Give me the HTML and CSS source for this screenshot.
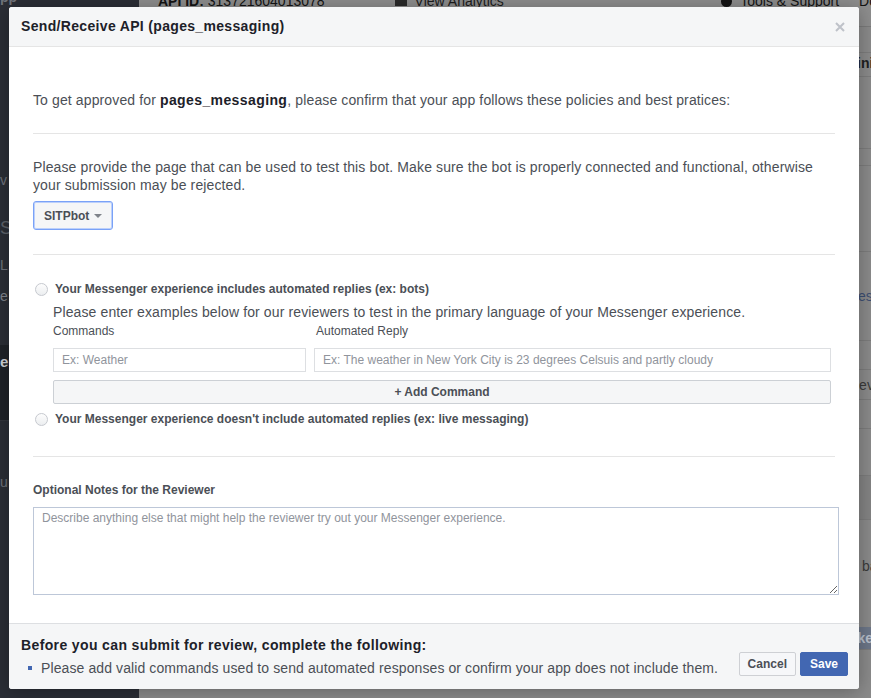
FILE: index.html
```html
<!DOCTYPE html>
<html lang="en">
<head>
<meta charset="utf-8">
<title>Send/Receive API</title>
<link rel="stylesheet" href="styles.css">
</head>
<body>
<div class="page">
  <aside class="sidebar">
    <div class="side-top">pp</div>
    <div class="side-item s1">v</div>
    <div class="side-item s2">S</div>
    <div class="side-item s3">L.c</div>
    <div class="side-item s4">e</div>
    <div class="side-band">er</div>
    <div class="side-item s5">u</div>
  </aside>
  <main class="main">
    <div class="topbar">
      <span class="api"><b>API ID:</b> 313721604013078</span>
      <span class="analytics"><i class="tb-icon"></i>View Analytics</span>
      <span class="tools"><i class="tb-bug"></i>Tools &amp; Support</span>
      <span class="docs">Docs</span>
    </div>
    <div class="rows">
      <div class="row r0"></div>
      <div class="row r1"><span class="rt bold">Adminis</span></div>
      <div class="row r2"></div>
      <div class="row r3"></div>
      <div class="row r4"></div>
      <div class="row r5"><span class="rt link">Messages</span></div>
      <div class="row r6"></div>
      <div class="row r7"><span class="rt">Review</span></div>
      <div class="row r8"></div>
      <div class="row r9"></div>
      <div class="row r10"></div>
      <div class="row r11"><span class="rt">bar</span></div>
      <div class="row r12"><span class="rt bold light">Make</span></div>
    </div>
  </main>
</div>

<div class="dialog">
  <div class="dlg-head">
    <h2 class="dlg-title">Send/Receive API (pages_messaging)</h2>
    <span class="dlg-close"><svg width="10" height="10" viewBox="0 0 10 10"><path d="M1 1L9 9M9 1L1 9" stroke="#bec2c9" stroke-width="2"/></svg></span>
  </div>
  <div class="dlg-body">
    <p class="intro">To get approved for <b>pages_messaging</b>, please confirm that your app follows these policies and best pratices:</p>
    <hr class="sep">
    <p class="text">Please provide the page that can be used to test this bot. Make sure the bot is properly connected and functional, otherwise your submission may be rejected.</p>
    <button class="select" type="button">SITPbot<i class="caret"></i></button>
    <hr class="sep">
    <label class="radio-row"><span class="radio"></span><span class="radio-label">Your Messenger experience includes automated replies (ex: bots)</span></label>
    <div class="indent">
      <p class="text">Please enter examples below for our reviewers to test in the primary language of your Messenger experience.</p>
      <div class="cmd-grid">
        <div class="col-label">Commands</div>
        <div class="col-label second">Automated Reply</div>
        <input class="field" type="text" placeholder="Ex: Weather">
        <input class="field" type="text" placeholder="Ex: The weather in New York City is 23 degrees Celsuis and partly cloudy">
      </div>
      <button class="add-btn" type="button">+ Add Command</button>
    </div>
    <label class="radio-row second-radio"><span class="radio"></span><span class="radio-label">Your Messenger experience doesn't include automated replies (ex: live messaging)</span></label>
    <hr class="sep sep-notes">
    <div class="notes-label">Optional Notes for the Reviewer</div>
    <textarea class="notes" placeholder="Describe anything else that might help the reviewer try out your Messenger experience."></textarea>
  </div>
  <div class="dlg-foot">
    <div class="foot-msg">
      <div class="foot-title">Before you can submit for review, complete the following:</div>
      <ul class="foot-list">
        <li>Please add valid commands used to send automated responses or confirm your app does not include them.</li>
      </ul>
    </div>
    <div class="foot-btns">
      <button class="btn cancel" type="button">Cancel</button>
      <button class="btn save" type="button">Save</button>
    </div>
  </div>
</div>
</body>
</html>
```

FILE: styles.css
```css
* { box-sizing: border-box; }
html, body { margin: 0; height: 100%; overflow: hidden; }
body {
  font-family: "Liberation Sans", Arial, sans-serif;
  background: #8b8b8b;
  position: relative;
}

/* dimmed background page */
.page { display: flex; height: 740px; margin-top: -10px; }
.sidebar {
  width: 139px; flex: none; background: #2b2e36;
  display: flex; flex-direction: column;
  color: #6f737b; font-size: 14px;
}
.side-top { height: 17px; line-height: 14px; color: #70747c; font-weight: bold; }
.side-item { height: 18px; line-height: 18px; }
.s1 { margin-top: 164px; }
.s2 { margin-top: 30px; font-size: 18px; color: #5f636b; }
.s3 { margin-top: 19px; }
.s4 { margin-top: 13px; color: #80848c; }
.side-band {
  margin-top: 40px; height: 76px; background: #1f2228; color: #d0d2d6;
  font-weight: bold; font-size: 15px; padding-top: 8px;
  border-bottom: 1px solid #33363d;
}
.s5 { margin-top: 52px; }

.main { flex: 1; display: flex; flex-direction: column; min-width: 0; }
.topbar {
  height: 37px; display: flex; align-items: flex-start; padding-top: 3px;
  font-size: 14px; color: #141414; border-bottom: 1px solid #7b7b7b;
  background: #8e8e8e;
}
.api { margin-left: 19px; line-height: 16px; }
.analytics { margin-left: 70px; line-height: 16px; display: flex; align-items: center; gap: 8px; color: #1c1c1c; }
.tb-icon { width: 12px; height: 10px; background: #2a2a2a; display: inline-block; }
.tools { margin-left: auto; line-height: 16px; display: flex; align-items: center; gap: 8px; }
.tb-bug { width: 11px; height: 11px; border-radius: 50%; background: #141414; display: inline-block; }
.docs { margin-left: 20px; margin-right: -20px; line-height: 16px; }

.rows { display: flex; flex-direction: column; }
.row { border-bottom: 1px solid #7d7d7d; display: flex; align-items: center; padding-left: 700px; font-size: 14px; color: #3a3a3a; flex: none; }
.rt { white-space: nowrap; }
.rt.bold { font-weight: bold; color: #1f1f1f; }
.rt.link { color: #3d4f73; }
.rt.light { color: #b9c0cc; }
.r0 { height: 26px; }
.r1 { height: 24px; padding-left: 687px; align-items: flex-start; padding-top: 2px; }
.r2 { height: 72px; }
.r3 { height: 17px; }
.r4 { height: 86px; }
.r5 { height: 89px; padding-left: 670px; }
.r6 { height: 29px; }
.r7 { height: 30px; padding-left: 710px; }
.r8 { height: 29px; }
.r9 { height: 47px; }
.r10 { height: 44px; background: #848484; }
.r11 { height: 92px; padding-left: 723px; border-bottom: 0; }
.r12 { height: 23px; background: #6d7789; padding-left: 699px; margin-top: 15px; }

/* dialog */
.dialog {
  position: absolute; left: 9px; top: 7px; width: 850px;
  background: #fff; border-radius: 3px;
  box-shadow: 0 2px 20px rgba(0,0,0,.3);
  overflow: hidden;
  color: #4b4f56;
}
.dlg-head {
  height: 40px; background: #f5f6f7; border-bottom: 1px solid #e5e5e5;
  display: flex; align-items: center; justify-content: space-between;
  padding: 0 14px 0 12px;
}
.dlg-title { margin: 0; font-size: 14px; font-weight: bold; color: #1d2129; line-height: 19px; letter-spacing: 0.33px; }
.dlg-close { display: flex; width: 10px; height: 10px; }

.dlg-body { padding: 44px 24px 28px 24px; }
.intro, .text { margin: 0; font-size: 14px; line-height: 18px; color: #4b4f56; letter-spacing: 0.12px; }
.intro b { color: #1d2129; letter-spacing: 0.4px; }
.sep { border: 0; border-top: 1px solid #e5e5e5; margin: 24px 0; height: 0; }
.select {
  margin-top: 7px; display: flex; align-items: center; gap: 4px;
  height: 29px; padding: 0 10px;
  background: #f5f6f7; border: 1px solid #7aa2f7; border-radius: 3px;
  box-shadow: 0 0 0 1px #bcd0fb inset;
  font-family: inherit; font-size: 12px; font-weight: bold; color: #4b4f56;
}
.caret { width: 0; height: 0; border-left: 4px solid transparent; border-right: 4px solid transparent; border-top: 4px solid #7f838a; margin-left: 1px; margin-top: 1px; }

.radio-row { display: flex; align-items: center; gap: 7px; height: 18px; margin-left: 2px; margin-top: 25px; }
.radio {
  width: 13px; height: 13px; border-radius: 50%; flex: none;
  border: 1px solid #c6c9cf;
  background: linear-gradient(#fdfdfd, #eceef0);
}
.radio-label { font-size: 12px; font-weight: bold; color: #4b4f56; }
.radio-row.second-radio { margin-top: 6px; }

.indent { margin: 5px 4px 0 20px; }
.cmd-grid { display: grid; grid-template-columns: 253px 1fr; column-gap: 8px; }
.col-label { font-size: 12px; line-height: 18px; color: #4b4f56; margin-bottom: 9px; padding-top: 1px; height: 18px; }
.col-label.second { padding-left: 2px; }
.field {
  height: 24px; border: 1px solid #dddfe2; border-radius: 0;
  padding: 0 8px; font-family: inherit; font-size: 12px; color: #1d2129;
  width: 100%;
}
.field::placeholder, .notes::placeholder { color: #90949c; }
.add-btn {
  margin-top: 8px; width: 100%; height: 24px; display: block;
  background: #f5f6f7; border: 1px solid #ccd0d5; border-radius: 2px;
  font-family: inherit; font-size: 12px; font-weight: bold; color: #4b4f56;
}
.sep-notes { margin-top: 28px; margin-bottom: 23px; }
.notes-label { font-size: 12px; font-weight: bold; line-height: 18px; color: #4b4f56; padding-top: 1px; height: 18px; }
.notes {
  display: block; margin-top: 9px; width: 806px; height: 88px;
  border: 1px solid #bdc7d8; padding: 3px 8px;
  font-family: inherit; font-size: 12px; color: #1d2129;
}

.dlg-foot {
  background: #f5f6f7; border-top: 1px solid #dddfe2;
  display: flex; align-items: flex-end; justify-content: space-between;
  padding: 12px 11px 12px 12px;
}
.foot-title { font-size: 14px; font-weight: bold; line-height: 18px; color: #1d2129; letter-spacing: 0.37px; }
.foot-list { margin: 4px 0 0; padding: 0 0 0 7px; list-style: none; }
.foot-list li { font-size: 14px; line-height: 18px; color: #4b4f56; display: flex; align-items: center; gap: 9px; letter-spacing: 0.1px; padding-top: 1px; }
.foot-list li::before { content: ""; width: 4px; height: 4px; background: #4267b2; flex: none; }
.foot-btns { display: flex; gap: 4px; margin-bottom: 1px; }
.btn {
  height: 24px; border-radius: 2px;
  font-family: inherit; font-size: 12px; font-weight: bold;
}
.cancel { background: #f6f7f9; border: 1px solid #ced0d4; color: #4b4f56; padding: 0 8px; }
.save { background: #4267b2; border: 1px solid #4267b2; color: #fff; padding: 0 9px; }
```
